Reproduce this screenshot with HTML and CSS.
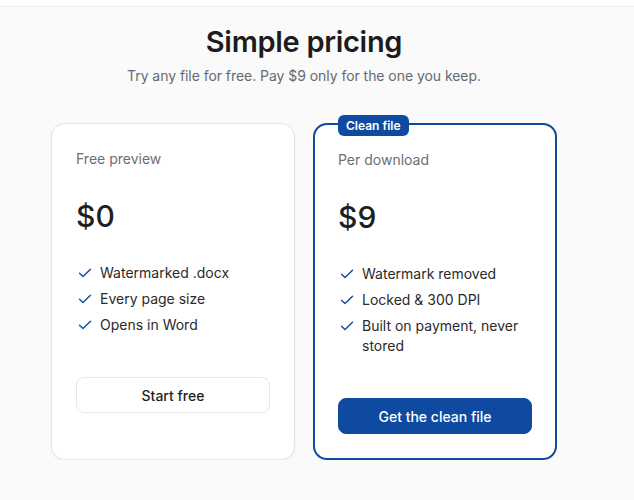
FILE: index.html
```html
<!DOCTYPE html>
<html lang="en">
<head>
<meta charset="utf-8">
<title>Simple pricing</title>
<link rel="stylesheet" href="styles.css">
</head>
<body>
<div class="topbar"></div>
<main class="pricing">
  <h1 class="title">Simple pricing</h1>
  <p class="subtitle">Try any file for free. Pay $9 only for the one you keep.</p>
  <div class="plans">
    <section class="plan">
      <div class="plan-label">Free preview</div>
      <div class="plan-price">$0</div>
      <ul class="features">
        <li><svg class="check" viewBox="0 0 14 10" width="14" height="10"><path d="M1.5 5.2 L5 8.5 L12.5 1.2"/></svg><span>Watermarked .docx</span></li>
        <li><svg class="check" viewBox="0 0 14 10" width="14" height="10"><path d="M1.5 5.2 L5 8.5 L12.5 1.2"/></svg><span>Every page size</span></li>
        <li><svg class="check" viewBox="0 0 14 10" width="14" height="10"><path d="M1.5 5.2 L5 8.5 L12.5 1.2"/></svg><span>Opens in Word</span></li>
      </ul>
      <button class="btn btn-outline">Start free</button>
    </section>
    <section class="plan plan-featured">
      <span class="badge">Clean file</span>
      <div class="plan-label">Per download</div>
      <div class="plan-price">$9</div>
      <ul class="features">
        <li><svg class="check" viewBox="0 0 14 10" width="14" height="10"><path d="M1.5 5.2 L5 8.5 L12.5 1.2"/></svg><span>Watermark removed</span></li>
        <li><svg class="check" viewBox="0 0 14 10" width="14" height="10"><path d="M1.5 5.2 L5 8.5 L12.5 1.2"/></svg><span>Locked &amp; 300 DPI</span></li>
        <li><svg class="check" viewBox="0 0 14 10" width="14" height="10"><path d="M1.5 5.2 L5 8.5 L12.5 1.2"/></svg><span>Built on payment, never stored</span></li>
      </ul>
      <button class="btn btn-primary">Get the clean file</button>
    </section>
  </div>
</main>
</body>
</html>
```

FILE: styles.css
```css
* { box-sizing: border-box; }
html, body { margin: 0; padding: 0; }
body {
  background: #fafafa;
  font-family: Inter, "Noto Sans", sans-serif;
  color: #1f1f1f;
}
.topbar {
  height: 7px;
  background: #ffffff;
  border-bottom: 1px solid #ececec;
}
.pricing {
  width: 506px;
  margin-left: 51px;
  padding-top: 17px;
}
.title {
  margin: 0;
  text-align: center;
  font-size: 29px;
  line-height: 36px;
  font-weight: 600;
  letter-spacing: -0.3px;
  color: #1c1c1c;
}
.subtitle {
  margin: 6px 0 0;
  text-align: center;
  font-size: 14px;
  line-height: 20px;
  letter-spacing: -0.05px;
  color: #666a70;
}
.plans {
  margin-top: 37px;
  display: grid;
  grid-template-columns: 1fr 1fr;
  gap: 18px;
  align-items: stretch;
}
.plan {
  position: relative;
  background: #ffffff;
  border: 1px solid #e6e6e6;
  border-radius: 14px;
  padding: 25px 24px 24px;
  box-shadow: 0 1px 3px rgba(0,0,0,0.06);
  display: flex;
  flex-direction: column;
  align-items: stretch;
}
.plan-featured {
  border: 2px solid #0e4ba0;
  padding: 25px 23px 24px;
  box-shadow: none;
}
.badge {
  position: absolute;
  top: -10px;
  left: 23px;
  background: #0e4ba0;
  color: #ffffff;
  font-size: 12px;
  font-weight: 600;
  line-height: 21px;
  padding: 0 8px;
  border-radius: 6px;
}
.plan-label {
  font-size: 14px;
  line-height: 20px;
  color: #6b6e73;
}
.plan-price {
  margin-top: 29px;
  font-size: 30px;
  line-height: 36px;
  font-weight: 500;
  color: #1f1f1f;
}
.features {
  list-style: none;
  margin: 29px 0 0;
  padding: 0;
  display: flex;
  flex-direction: column;
  gap: 6px;
}
.features li {
  display: flex;
  align-items: flex-start;
  gap: 8px;
  font-size: 14px;
  line-height: 20px;
  color: #2a2a2a;
}
.check {
  flex: 0 0 auto;
  margin-top: 5px;
  margin-left: 2px;
  fill: none;
  stroke: #0e4ba0;
  stroke-width: 1.4;
  stroke-linecap: round;
  stroke-linejoin: round;
}
.btn {
  margin-top: 42px;
  height: 36px;
  border-radius: 8px;
  font-family: inherit;
  font-size: 14px;
  font-weight: 500;
  cursor: pointer;
}
.btn-outline {
  background: #ffffff;
  border: 1px solid #e6e6e6;
  color: #1f1f1f;
}
.btn-primary {
  background: #0e4ba0;
  border: 1px solid #0e4ba0;
  color: #ffffff;
}
```
